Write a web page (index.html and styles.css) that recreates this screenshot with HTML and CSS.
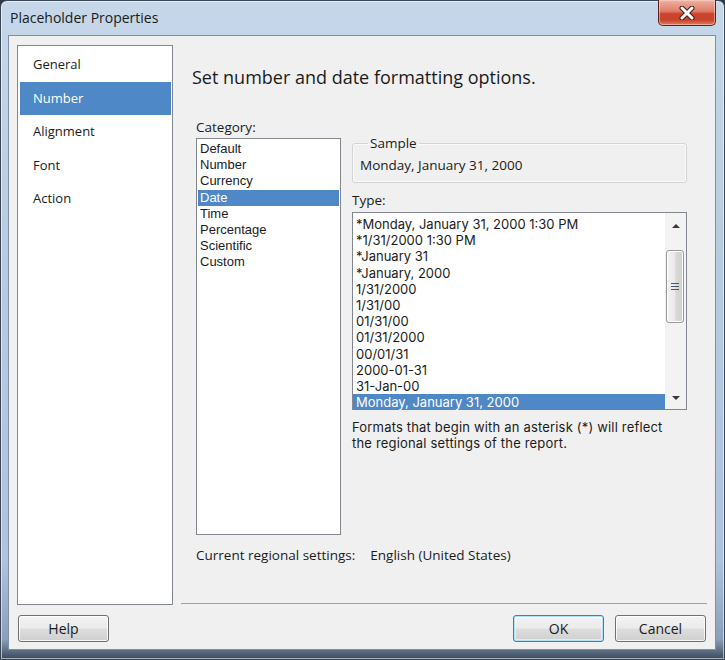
FILE: index.html
```html
<!DOCTYPE html>
<html lang="en">
<head>
<meta charset="utf-8">
<title>Placeholder Properties</title>
<link rel="stylesheet" href="styles.css">
</head>
<body>
<div class="window">
  <div class="titlebar">
    <span class="title">Placeholder Properties</span>
    <button class="close" aria-label="Close">
      <svg width="18" height="14" viewBox="0 0 18 14">
        <path d="M4 2 L14 12 M14 2 L4 12" stroke="#4a1a14" stroke-width="5" stroke-linecap="round"/>
        <path d="M4 2 L14 12 M14 2 L4 12" stroke="#ffffff" stroke-width="3" stroke-linecap="round"/>
      </svg>
    </button>
  </div>
  <div class="client">
    <div class="main">
      <ul class="nav">
        <li>General</li>
        <li class="sel">Number</li>
        <li>Alignment</li>
        <li>Font</li>
        <li>Action</li>
      </ul>
      <div class="pane">
        <h1 class="heading">Set number and date formatting options.</h1>
        <div class="cols">
          <div class="col-cat">
            <div class="label">Category:</div>
            <ul class="catlist">
              <li>Default</li>
              <li>Number</li>
              <li>Currency</li>
              <li class="sel">Date</li>
              <li>Time</li>
              <li>Percentage</li>
              <li>Scientific</li>
              <li>Custom</li>
            </ul>
          </div>
          <div class="col-type">
            <fieldset class="sample">
              <legend>Sample</legend>
              <div class="sample-text">Monday, January 31, 2000</div>
            </fieldset>
            <div class="label type-label">Type:</div>
            <div class="typelist">
              <ul class="types">
                <li>*Monday, January 31, 2000 1:30 PM</li>
                <li>*1/31/2000 1:30 PM</li>
                <li>*January 31</li>
                <li>*January, 2000</li>
                <li>1/31/2000</li>
                <li>1/31/00</li>
                <li>01/31/00</li>
                <li>01/31/2000</li>
                <li>00/01/31</li>
                <li>2000-01-31</li>
                <li>31-Jan-00</li>
                <li class="sel">Monday, January 31, 2000</li>
              </ul>
              <div class="vscroll">
                <div class="arrow up"></div>
                <div class="track">
                  <div class="thumb"><span class="grip"></span></div>
                </div>
                <div class="arrow down"></div>
              </div>
            </div>
            <p class="note">Formats that begin with an asterisk (*) will reflect<br>the regional settings of the report.</p>
          </div>
        </div>
        <div class="regional">
          <span>Current regional settings:</span>
          <span>English (United States)</span>
        </div>
      </div>
    </div>
    <div class="footer">
      <button class="btn">Help</button>
      <span class="spacer"></span>
      <button class="btn ok">OK</button>
      <button class="btn">Cancel</button>
    </div>
  </div>
</div>
</body>
</html>
```
FILE: styles.css
```css
* { box-sizing: border-box; }

html, body {
  margin: 0;
  padding: 0;
  background: #2c3a4a;
}

body {
  font-family: "Open Sans", "Noto Sans", sans-serif;
  font-size: 13.5px;
  color: #1b1b1b;
}

.window {
  width: 725px;
  height: 660px;
  display: flex;
  flex-direction: column;
  background: linear-gradient(180deg, #c6d7ea 0%, #b7cbe0 40%, #aec4db 85%, #8aa0b8 97%, #3a4a5e 100%);
  border: 1px solid #3b4656;
  border-radius: 7px 7px 0 0;
  padding: 0 8px 9px 7px;
  box-shadow: inset 0 0 0 1px rgba(255,255,255,0.55);
}

.titlebar {
  height: 34px;
  display: flex;
  align-items: flex-start;
  flex-shrink: 0;
}

.title {
  font-size: 14px;
  line-height: 18px;
  padding: 8px 0 0 2px;
  color: #1a1a1a;
}

.close {
  margin-left: auto;
  margin-top: -1px;
  width: 58px;
  height: 26px;
  padding: 0;
  border: 1px solid #5a2118;
  border-top: none;
  border-radius: 0 0 5px 5px;
  background: linear-gradient(180deg, #eeb2a4 0%, #de7d68 45%, #cc4430 55%, #c9432c 80%, #e07e60 100%);
  box-shadow: inset 0 0 0 1px rgba(255,220,210,0.5);
  display: flex;
  align-items: center;
  justify-content: center;
}

.client {
  flex: 1;
  display: flex;
  flex-direction: column;
  background: #f0f0f0;
  border: 1px solid #7d8fa4;
}

.main {
  display: flex;
  gap: 8px;
  padding: 9px 8px 0 8px;
  height: 569px;
}

.nav {
  list-style: none;
  margin: 0;
  padding: 2px 1px 0 2px;
  width: 156px;
  height: 560px;
  background: #ffffff;
  border: 1px solid #838790;
  font-size: 13px;
}

.nav li {
  height: 33.5px;
  line-height: 33px;
  padding-left: 13px;
  color: #1b1b1b;
}

.nav li.sel {
  background: #4f88c6;
  color: #ffffff;
}

.pane {
  flex: 1;
  height: 559px;
  border-bottom: 1px solid #a0a0a0;
  padding: 21px 0 0 11px;
  display: flex;
  flex-direction: column;
}

.heading {
  margin: 0;
  font-size: 18px;
  font-weight: normal;
  line-height: 22px;
  color: #1b1b1b;
}

.cols {
  display: flex;
  gap: 11px;
  margin-top: 31px;
  padding-left: 4px;
}

.label {
  line-height: 16px;
  height: 16px;
}

.col-cat {
  width: 145px;
  display: flex;
  flex-direction: column;
}

.catlist {
  list-style: none;
  margin: 3px 0 0 0;
  padding: 2px 1px 0 1px;
  height: 397px;
  background: #ffffff;
  border: 1px solid #838790;
  font-family: "Liberation Sans", Arial, sans-serif;
  font-size: 13px;
}

.catlist li {
  height: 16.2px;
  line-height: 16px;
  padding-left: 2px;
}

.catlist li.sel {
  background: #4f88c6;
  color: #ffffff;
}

.col-type {
  width: 335px;
  display: flex;
  flex-direction: column;
  padding-top: 16px;
}

.sample {
  margin: 0;
  padding: 6px 8px 9px 7px;
  border: 1px solid #d2d4d6;
  border-radius: 3px;
  box-shadow: inset 0 0 0 1px #fafafa;
  width: 335px;
}

.sample legend {
  padding: 0 2px;
  margin-left: 8px;
  line-height: 16px;
}

.sample-text {
  line-height: 16px;
}

.type-label {
  margin-top: 9px;
}

.typelist {
  margin-top: 4px;
  height: 198px;
  background: #ffffff;
  border: 1px solid #838790;
  display: flex;
}

.types {
  list-style: none;
  margin: 0;
  padding: 3px 0 0 0;
  flex: 1;
  font-family: "Inter", "Open Sans", sans-serif;
  font-size: 13px;
}

.types li {
  height: 16.2px;
  line-height: 16px;
  padding-left: 3px;
  white-space: nowrap;
}

.types li.sel {
  background: #4f88c6;
  color: #ffffff;
}

.vscroll {
  width: 21px;
  display: flex;
  flex-direction: column;
  background: #f3f3f3;
  border-left: 1px solid #f0f0f0;
}

.arrow {
  height: 22px;
  display: flex;
  align-items: center;
  justify-content: center;
}

.arrow::before {
  content: "";
  width: 0;
  height: 0;
  border-left: 4px solid transparent;
  border-right: 4px solid transparent;
}

.arrow.up::before { border-bottom: 4px solid #3a3a3a; }
.arrow.down::before { border-top: 4px solid #3a3a3a; }

.arrow.up { height: 24px; padding-top: 2px; }
.arrow.down { height: 20px; padding-bottom: 2px; }

.track {
  flex: 1;
  padding: 13px 2px 0 0;
}

.thumb {
  height: 73px;
  border: 1px solid #9a9a9a;
  border-radius: 3px;
  background: linear-gradient(90deg, #f4f4f4 0%, #e9e9e9 50%, #d9d9d9 55%, #d0d0d0 100%);
  box-shadow: inset 0 0 0 1px #ffffff;
  display: flex;
  align-items: center;
  justify-content: center;
}

.grip {
  width: 8px;
  height: 7px;
  background: repeating-linear-gradient(180deg, #4a5a6a 0 1px, transparent 1px 3px);
}

.note {
  margin: 9px 0 0 0;
  line-height: 16px;
  font-family: "Inter", "Open Sans", sans-serif;
  font-size: 13px;
  letter-spacing: 0.18px;
}

.regional {
  margin-top: 12px;
  padding-left: 4px;
  line-height: 16px;
  display: flex;
  gap: 15px;
}

.footer {
  display: flex;
  gap: 11px;
  padding: 10px 9px 0 9px;
}

.spacer { flex: 1; }

.btn {
  width: 91px;
  height: 27px;
  padding: 0;
  font-family: "Open Sans", "Noto Sans", sans-serif;
  font-size: 14px;
  color: #1b1b1b;
  border: 1px solid #707070;
  border-radius: 3px;
  background: linear-gradient(180deg, #f3f3f3 0%, #ebebeb 48%, #dddddd 52%, #cfcfcf 100%);
  box-shadow: inset 0 0 0 1px rgba(255,255,255,0.8);
}

.btn.ok {
  border-color: #3c7fb1;
  box-shadow: inset 0 0 0 1px #b4e0f5, inset 0 0 0 2px rgba(255,255,255,0.5);
}
```
